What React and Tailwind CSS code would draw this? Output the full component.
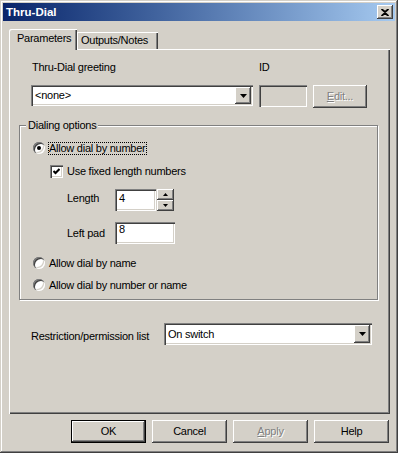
const sunken = 'shadow-[inset_1px_1px_#808080,inset_2px_2px_#404040,inset_-1px_-1px_#ffffff,inset_-2px_-2px_#d4d0c8]';
const raised = 'shadow-[inset_-1px_-1px_#404040,inset_1px_1px_#ffffff,inset_-2px_-2px_#808080,inset_2px_2px_#d4d0c8]';
const disabledText = 'text-[#808080] [text-shadow:1px_1px_0_#ffffff]';

const DownArrow = () => (
  <svg width="7" height="4" viewBox="0 0 7 4">
    <path d="M0 0h7L3.5 4z" fill="#000" />
  </svg>
);

const SmallArrow = ({ up }) => (
  <svg width="5" height="3" viewBox="0 0 5 3">
    <path d={up ? 'M2.5 0L5 3H0z' : 'M0 0h5L2.5 3z'} fill="#000" />
  </svg>
);

const Combo = ({ value, className, buttonClass }) => (
  <div className={`flex items-center bg-white p-[2px] ${sunken} ${className}`}>
    <span className="flex-1 pl-[2px]">{value}</span>
    <span className={`flex items-center justify-center bg-[#d4d0c8] ${raised} ${buttonClass}`}>
      <DownArrow />
    </span>
  </div>
);

const Radio = ({ checked }) => (
  <span className={`flex h-3 w-3 shrink-0 items-center justify-center rounded-full bg-white ${sunken}`}>
    {checked && <span className="h-1 w-1 rounded-full bg-black" />}
  </span>
);

const Button = ({ children, className = '', isDefault }) => (
  <button
    className={`flex h-[23px] w-[75px] items-center justify-center bg-[#d4d0c8] pb-px ${
      isDefault
        ? 'shadow-[inset_0_0_0_1px_#000000,inset_-2px_-2px_#404040,inset_2px_2px_#ffffff,inset_-3px_-3px_#808080]'
        : raised
    } ${className}`}
  >
    {children}
  </button>
);

export default function App() {
  return (
    <div className="flex h-[453px] w-[398px] flex-col bg-[#d4d0c8] p-[3px] font-['Liberation_Sans',Arial,sans-serif] text-[11px] leading-[13px] tracking-[-0.25px] text-black shadow-[inset_-1px_-1px_#404040,inset_1px_1px_#d4d0c8,inset_-2px_-2px_#808080,inset_2px_2px_#ffffff]">
      {/* title bar */}
      <div className="flex h-[18px] items-center justify-between bg-linear-to-r from-[#0a246a] to-[#a6caf0] pl-[3px] pr-[2px]">
        <span className="text-[11.5px] font-bold tracking-normal text-white">Thru-Dial</span>
        <span className={`flex h-[14px] w-4 items-center justify-center bg-[#d4d0c8] ${raised}`}>
          <svg width="8" height="7" viewBox="0 0 8 7">
            <path d="M0.5 0L4 3L7.5 0M0.5 7L4 4L7.5 7" stroke="#000" strokeWidth="1.8" fill="none" />
          </svg>
        </span>
      </div>

      {/* tabs */}
      <div className="mt-[8px] flex h-[20px] items-end pl-[6px]">
        <div className="relative z-10 -mb-px h-[21px] w-[68px] rounded-tl-[2px] bg-[#d4d0c8] pl-[8px] pt-[3px] shadow-[inset_1px_1px_#ffffff,inset_-1px_0_#404040,inset_-2px_0_#808080]">
          Parameters
        </div>
        <div className="h-[17px] w-[81px] pl-[4px] pt-[2px] shadow-[inset_1px_1px_#ffffff,inset_-1px_0_#404040,inset_-2px_0_#808080]">
          Outputs/Notes
        </div>
      </div>

      {/* tab panel */}
      <div className="ml-[6px] flex h-[365px] w-[381px] flex-col shadow-[inset_1px_1px_#ffffff,inset_-1px_-1px_#404040,inset_-2px_-2px_#808080]">
        <div className="ml-[22px] mt-[12px] flex h-[13px]">
          <span className="w-[222px] pl-px">Thru-Dial greeting</span>
          <span className="ml-[6px]">ID</span>
        </div>
        <div className="ml-[22px] mt-[11px] flex items-start">
          <Combo value="<none>" className="h-[21px] w-[222px]" buttonClass="h-[17px] w-4" />
          <div className={`ml-[6px] h-[22px] w-[48px] ${sunken}`} />
          <div className={`ml-[6px] flex h-[23px] w-[54px] items-center justify-center ${raised} ${disabledText}`}>
            <span>
              <span className="underline underline-offset-1">E</span>dit...
            </span>
          </div>
        </div>

        {/* Dialing options group */}
        <div className="relative ml-[10px] mt-[17px] h-[175px] w-[359px] border border-[#808080] shadow-[inset_1px_1px_#ffffff,1px_1px_#ffffff]">
          <span className="absolute left-[6px] top-[-7px] bg-[#d4d0c8] px-[2px]">Dialing options</span>

          <div className="mt-[15px] flex h-[14px] items-center pl-[13px]">
            <Radio checked />
            <span className="ml-[3px] border border-dotted border-black leading-[11px]">Allow dial by number</span>
          </div>

          <div className="mt-[9px] flex h-[14px] items-center pl-[30px]">
            <span className={`flex h-[13px] w-[13px] items-center justify-center bg-white ${sunken}`}>
              <svg width="7" height="7" viewBox="0 0 7 7">
                <polyline points="0.5,3 2.5,5 6.5,1" stroke="#000" strokeWidth="2" fill="none" />
              </svg>
            </span>
            <span className="ml-[4px]">Use fixed length numbers</span>
          </div>

          <div className="mt-[11px] flex h-[22px] items-start pl-[47px]">
            <span className="w-[48px] pt-[3px]">Length</span>
            <div className={`h-[22px] w-[41px] bg-white pl-[4px] pt-[3px] ${sunken}`}>4</div>
            <div className="ml-px flex w-[17px] flex-col">
              <span className={`flex h-[11px] items-center justify-center bg-[#d4d0c8] ${raised}`}>
                <SmallArrow up />
              </span>
              <span className={`flex h-[11px] items-center justify-center bg-[#d4d0c8] ${raised}`}>
                <SmallArrow />
              </span>
            </div>
          </div>

          <div className="mt-[11px] flex h-[22px] items-start pl-[47px]">
            <span className="w-[48px] pt-[5px]">Left pad</span>
            <div className={`h-[22px] w-[60px] bg-white pl-[4px] pt-px ${sunken}`}>8</div>
          </div>

          <div className="mt-[12px] flex h-[14px] items-center pl-[13px]">
            <Radio />
            <span className="ml-[4px]">Allow dial by name</span>
          </div>

          <div className="mt-[8px] flex h-[14px] items-center pl-[13px]">
            <Radio />
            <span className="ml-[4px]">Allow dial by number or name</span>
          </div>
        </div>

        <div className="ml-[22px] mt-[23px] flex items-start">
          <span className="w-[133px] pt-[7px]">Restriction/permission list</span>
          <Combo value="On switch" className="h-[22px] w-[208px]" buttonClass="h-[18px] w-4" />
        </div>
      </div>

      {/* buttons */}
      <div className="mt-[6px] flex justify-end gap-[6px] pr-[6px]">
        <Button isDefault>OK</Button>
        <Button>Cancel</Button>
        <Button className={disabledText}>
          <span>
            <span className="underline underline-offset-1">A</span>pply
          </span>
        </Button>
        <Button>Help</Button>
      </div>
    </div>
  );
}
